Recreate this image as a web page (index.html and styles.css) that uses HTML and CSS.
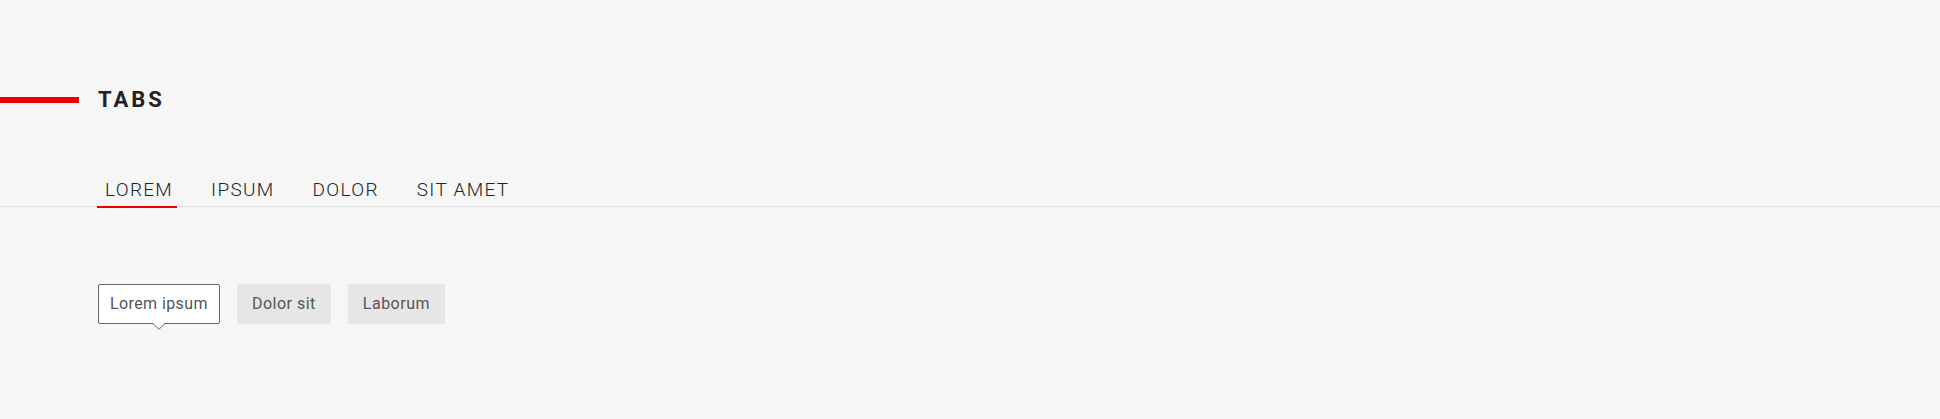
FILE: index.html
```html
<!DOCTYPE html>
<html>
<head>
<meta charset="utf-8">
<link rel="stylesheet" href="styles.css">
</head>
<body>
<div class="page">
  <header class="section-head">
    <span class="bar"></span>
    <h1 class="title">TABS</h1>
  </header>
  <nav class="tabs">
    <a class="tab active">LOREM</a>
    <a class="tab">IPSUM</a>
    <a class="tab">DOLOR</a>
    <a class="tab">SIT AMET</a>
  </nav>
  <div class="chips">
    <span class="chip selected">Lorem ipsum<svg class="pointer" width="12" height="7" viewBox="0 0 12 7"><path d="M0 0 L6 6 L12 0 Z" fill="#fff"/><path d="M0 0.5 L6 6.3 L12 0.5" fill="none" stroke="#666" stroke-width="1"/></svg></span>
    <span class="chip">Dolor sit</span>
    <span class="chip">Laborum</span>
  </div>
</div>
</body>
</html>
```

FILE: styles.css
```css
html, body {
  margin: 0;
  padding: 0;
  background: #f6f6f6;
}
body {
  font-family: Roboto, "Liberation Sans", sans-serif;
  color: #222;
}
.page {
  padding-top: 85px;
  padding-bottom: 90px;
  min-height: 419px;
  box-sizing: border-box;
}
.section-head {
  display: flex;
  align-items: center;
  height: 30px;
  gap: 19px;
}
.bar {
  display: block;
  width: 79px;
  height: 6px;
  background: #ee0000;
}
.title {
  margin: 0;
  font-size: 22px;
  line-height: 30px;
  font-weight: 700;
  letter-spacing: 3px;
  color: #222;
}
.tabs {
  display: flex;
  margin-top: 63px;
  padding-left: 97px;
  border-bottom: 1px solid #e0e0e0;
  gap: 26px;
}
.tab {
  display: block;
  padding: 0 4px 4px 8px;
  font-size: 19px;
  line-height: 24px;
  font-weight: 300;
  letter-spacing: 1.3px;
  color: #222;
  border-bottom: 2px solid transparent;
  margin-bottom: -2px;
}
.tab.active {
  border-bottom-color: #ee0000;
}
.chips {
  display: flex;
  gap: 17px;
  padding-left: 98px;
  margin-top: 77px;
}
.chip {
  position: relative;
  display: block;
  box-sizing: border-box;
  height: 40px;
  padding: 0 15px;
  font-size: 16px;
  line-height: 40px;
  letter-spacing: 0.5px;
  color: #555;
  background: #e6e6e6;
  border-radius: 2px;
}
.chip.selected {
  background: #fff;
  border: 1px solid #666;
  line-height: 38px;
  padding: 0 11px;
  letter-spacing: 0.4px;
}
.pointer {
  position: absolute;
  left: 50%;
  bottom: -7px;
  margin-left: -6px;
  display: block;
}
```
